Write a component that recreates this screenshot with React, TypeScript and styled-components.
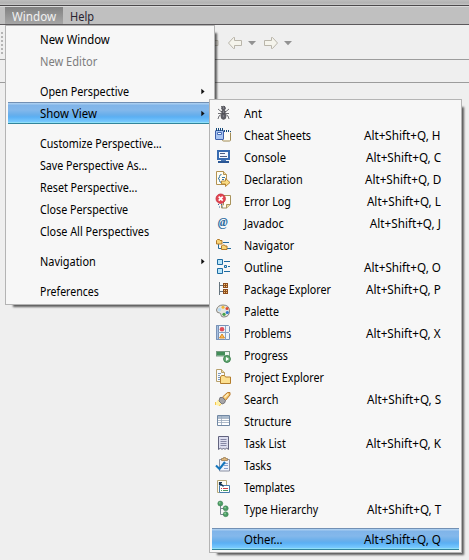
import React from "react";
import styled, { createGlobalStyle, css } from "styled-components";

const GlobalStyle = createGlobalStyle`
  * { box-sizing: border-box; }
  body { margin: 0; background: #efefef; overflow: hidden; }
`;

const Page = styled.div`
  position: relative;
  width: 469px;
  height: 560px;
  overflow: hidden;
  background: #efefef;
  font: 12px/22px "Noto Sans", "Open Sans", sans-serif;
  color: #000;
`;

const TitleStrip = styled.div`
  height: 6px;
  background: linear-gradient(#bdbdbd, #b2b2b2 3px, #c8c8c8 5px);
  border-bottom: 1px solid #4c4a4c;
`;

const MenuBar = styled.nav`
  display: flex;
  height: 19px;
  padding-left: 5px;
  background: #c0c0c0;
  border-top: 1px solid #dadada;
  border-bottom: 1px solid #5c595c;
`;

const MenuBarItem = styled.div<{ $active?: boolean }>`
  width: ${(p) => (p.$active ? 58 : 48)}px;
  height: 17px;
  padding-left: 7px;
  line-height: 19px;
  white-space: nowrap;
  color: ${(p) => (p.$active ? "#f1f1f1" : "#282330")};
  ${(p) => p.$active && css`background: linear-gradient(#818181, #a6a6a6);`}
`;

const ToolBar = styled.div`
  display: flex;
  align-items: flex-start;
  height: 35px;
  padding: 7px 0 0 1px;
  border-bottom: 1px solid #9c9c9c;
`;

const Grip = styled.div`
  width: 2px;
  height: 23px;
  margin-right: 209px;
  background: repeating-linear-gradient(#b5b5b5 0 2px, transparent 2px 4px);
`;

const SubBar = styled.div`
  height: 23px;
  border-bottom: 1px solid #9c9c9c;
`;

const Menu = styled.div<{ $x: number; $y: number; $w: number; $h: number }>`
  position: absolute;
  left: ${(p) => p.$x}px;
  top: ${(p) => p.$y}px;
  width: ${(p) => p.$w}px;
  height: ${(p) => p.$h}px;
  padding: 2px;
  background: #f7f7f7;
  border: 1px solid #b4b4b4;
  box-shadow: 5px 5px 2px -3px rgba(0, 0, 0, 0.62);
`;

const Row = styled.div<{ $selected?: boolean; $disabled?: boolean; $sub?: boolean }>`
  display: flex;
  align-items: center;
  height: 22px;
  padding-left: ${(p) => (p.$sub ? 3 : 32)}px;
  padding-right: ${(p) => (p.$sub ? 18 : 7)}px;
  color: ${(p) => (p.$disabled ? "#7d7d7d" : "#000")};
  ${(p) =>
    p.$selected &&
    css`
      background: linear-gradient(
        #7290b4 0 1px, #a8cdf0 1px 2px, #80b4e9 3px, #83b8eb 8px, #67aeeb 13px,
        #5bb0f4 15px, #79caff 20px, #90e0f8 20px 21px, #32849c 21px
      );
    `}
`;

const Gap = styled.div`
  height: 8px;
`;

const IconCell = styled.span`
  width: 29px;
  height: 16px;
  flex: none;
`;

const Label = styled.span<{ $fit?: number }>`
  flex: 1;
  padding-top: 1px;
  white-space: nowrap;
  transform: scaleX(${(p) => p.$fit ?? 1});
  transform-origin: 0 50%;
`;

const Shortcut = styled.span`
  padding-top: 1px;
  white-space: nowrap;
  transform: scaleX(0.975);
  transform-origin: 100% 50%;
`;

const BarLabel = styled.span<{ $fit: number }>`
  display: inline-block;
  transform: scaleX(${(p) => p.$fit});
  transform-origin: 0 50%;
`;

const Svg = styled.svg`
  display: block;
  flex: none;
  overflow: visible;
`;

const ToolIcon = styled(Svg)<{ $gap: number }>`
  margin-left: ${(p) => p.$gap}px;
`;

const Arrow = () => (
  <Svg width="4" height="7" viewBox="0 0 4 7">
    <path d="M.3 .8v5.4L3.6 3.5z" fill="#111" />
  </Svg>
);

const HistoryArrow = ({ back, gap }: { back?: boolean; gap: number }) => (
  <ToolIcon $gap={gap} width="14" height="22" viewBox="0 0 14 22">
    <path
      transform={back ? "matrix(-1 0 0 1 14 0)" : undefined}
      d="M.5 8.5h7v-3h1l5 5.5-5 5.5h-1v-3h-7z"
      fill="#f5f4ec"
      stroke="#b9b5aa"
    />
  </ToolIcon>
);

const DropTriangle = ({ gap }: { gap: number }) => (
  <ToolIcon $gap={gap} width="8" height="22" viewBox="0 0 8 22">
    <path d="M0 9h8L4 13.3z" fill="#929292" />
  </ToolIcon>
);

const EditLocation = () => (
  <ToolIcon $gap={0} width="8" height="22" viewBox="0 0 8 22">
    <path d="M0 8.5h6v5H0z" fill="#e8e6e0" stroke="#c0bcb2" />
  </ToolIcon>
);

const grid = (x: number, y: number) => (
  <g key={y}>
    <rect x={x} y={y} width="5" height="5" fill="#8d4c1d" />
    <path d={`M${x + 1} ${y + 1}h1v1h-1zM${x + 3} ${y + 1}h1v1h-1zM${x + 1} ${y + 3}h1v1h-1zM${x + 3} ${y + 3}h1v1h-1z`} fill="#f5c777" />
  </g>
);

const ball = (x: number, y: number) => (
  <g key={`${x}-${y}`}>
    <circle cx={x} cy={y} r="2.5" fill="#4b9d65" stroke="#39794e" strokeWidth=".5" />
    <circle cx={x - 0.6} cy={y - 0.7} r=".9" fill="#8aca94" />
  </g>
);

const icons: Record<string, React.ReactNode> = {
  ant: (
    <g fill="#606068" stroke="#4c4c53" strokeWidth=".8">
      <path d="M6 1l2 2 2-2M3 4l3 2.5h5L14 4M3 8.5h11M3 14l1-3 3-2h3l3 2 1 3" fill="none" />
      <circle cx="8.5" cy="3.2" r="1.9" />
      <circle cx="8.5" cy="7" r="1.8" />
      <ellipse cx="8.5" cy="11.5" rx="2.4" ry="2.8" />
      <path d="M8 3h1M8 7h1M8 11h1" stroke="#b0b0b8" />
    </g>
  ),
  cheat: (
    <>
      <rect x="7.5" y="4.5" width="8" height="9.5" rx="1" fill="#fffdf5" stroke="#a28c55" />
      <path d="M7 4.5h9" stroke="#f7f7f7" strokeWidth="2" />
      <path d="M9.5 3v2M11.5 3v2M13.5 3v2M15.5 4v1" stroke="#174a79" />
      <rect x=".5" y="3.5" width="8" height="9" rx=".5" fill="#a9c5f2" stroke="#3e60ab" />
      <path d="M1.5 1v3M3.5 1v3M5.5 1v3M7.5 1v3" stroke="#174a79" />
      <path d="M2.5 5.5h4v2h-4z" fill="#fff" stroke="#4a70b8" />
    </>
  ),
  console: (
    <>
      <path d="M3 2h11v8H3z" fill="#f4f8fe" stroke="#386bb0" strokeWidth="2" />
      <path d="M5 4.5h5M5 7.5h7" stroke="#4d5f85" />
      <path d="M6 11h5v1.5H6z" fill="#4a78b5" />
      <path d="M3 13h11" stroke="#2b5795" strokeWidth="2" />
    </>
  ),
  declaration: (
    <>
      <path d="M1.5.5h7l3 3v10h-10z" fill="#fffdf2" stroke="#b49351" />
      <path d="M8.5.5v3h3" fill="#eed9a0" stroke="#b49351" />
      <path d="M6.5 3.5Q4.5 3.5 4.5 5.5T3 7.5q1.500 0 1.500 2t2 2M7 6.5h3M7 8.5h2" fill="none" stroke="#3975a5" />
      <path d="M6.5 10h4V7.500l4.500 4-4.500 4V13h-4z" fill="#fbdc82" stroke="#ab7625" strokeWidth=".8" />
    </>
  ),
  error: (
    <>
      <path d="M8.5 2.5h7v9l-4 3.5h-5v-3h2z" fill="#fffdf2" stroke="#a9935c" />
      <path d="M11.5 15v-3.5h4" fill="#eed9a0" stroke="#a9935c" />
      <path d="M3 11.5h1M6 11.5h1M4 14h1M7 14h1" stroke="#3b699d" />
      <circle cx="5.7" cy="5.7" r="4.7" fill="#e34652" stroke="#c22a38" strokeWidth=".8" />
      <path d="M3.7 3.7l4 4m0-4l-4 4" stroke="#fff" strokeWidth="1.7" />
    </>
  ),
  javadoc: (
    <text x="2.7" y="11" fontFamily="Liberation Serif, serif" fontSize="12" fontWeight="700" fontStyle="italic" fill="#2c6c9f">@</text>
  ),
  navigator: (
    <>
      <path d="M3.5 7v4.5H7M8 5.5h6M12 11.5h4" fill="none" stroke="#276b9c" />
      <path d="M1.5 3.5l1-1h2l.5 1h2v3.5H1.5zM6.5 9l1-1h2l.5 1h2v3.5H6.5z" fill="#f9d579" stroke="#b47b29" />
    </>
  ),
  outline: (
    <g fill="#b8e5fa" stroke="#1f6ca2">
      <path d="M2.5.5h5v5h-5zM2.5 9.5h5v5h-5z" />
      <path d="M9.5 6.5h2v2h-2z" />
      <path d="M9 2.5h6M13 7.5h2M9 12.5h6" />
    </g>
  ),
  pkg: (
    <>
      <path d="M4.5 1v13M4 4.5h4M4 10.5h4" stroke="#66757f" fill="none" />
      {[2, 8].map((y) => grid(8, y))}
    </>
  ),
  palette: (
    <>
      <path d="M1.500 7Q2.500 2 8 2q6.500 0 6.500 6T8.500 14q-2.500 0-2.500-2t-1.500-2Q1.500 10 1.500 7z" fill="#e6e5df" stroke="#85857f" />
      <circle cx="4.500" cy="6.800" r="1.700" fill="#b8dbf4" />
      <circle cx="8" cy="4.300" r="1.500" fill="#f2b835" />
      <circle cx="12" cy="5.500" r="1.500" fill="#e4482e" />
      <circle cx="12.300" cy="9.500" r="1.600" fill="#3176cf" />
      <circle cx="9" cy="11.300" r="1.600" fill="#46a14a" />
    </>
  ),
  problems: (
    <>
      <path d="M1.5.5h12l1 1v5l-1 1 1 1v6h-13z" fill="#eef4fb" stroke="#7993b7" />
      <path d="M1.5.5h2v14h-2z" fill="#a9c2e2" stroke="#7993b7" />
      <path d="M3 7.5h11M10.5 1v14" stroke="#8ba3c4" />
      <circle cx="7" cy="4.2" r="2.3" fill="#e14e58" />
      <path d="M7 9l2.500 4h-5z" fill="#f8bd54" stroke="#df8b27" />
    </>
  ),
  progress: (
    <>
      <rect x="1.5" y="4.5" width="13" height="4.5" fill="#eef6ef" stroke="#779b82" />
      <path d="M2 5h8v3.5H2z" fill="#438e59" />
      <circle cx="12" cy="12" r="3.4" fill="#65ad74" stroke="#3d814f" />
      <path d="M11 10l3 2-3 2z" fill="#fff" />
    </>
  ),
  project: (
    <>
      <path d="M1.5.5h5l3 3v9h-8z" fill="#f8fafc" stroke="#b8a16c" />
      <path d="M6.5.5v3h3" fill="#eed9a0" stroke="#b8a16c" />
      <path d="M3 4.5h3M3 6.5h2M3 8.5h2M3 10.5h2" stroke="#7c9abf" />
      <path d="M5.5 8l1-1.5h3l1 1.5h5v6.5h-10z" fill="#fce090" stroke="#b47e2d" />
    </>
  ),
  search: (
    <>
      <path d="M0 13.500l3-5 5 4-4 2.500z" fill="#fff1a8" />
      <path d="M.5 14v-3M4 14.500l2-1" stroke="#f5c64c" />
      <path d="M7.500 6L12.500 1.500h2.500V4L10.500 9.500z" fill="#f5c46c" stroke="#b87b32" />
      <path d="M9.500 6.500L13 3" stroke="#fff1c1" strokeWidth="1.500" />
      <path d="M5 6.500h2.500l3 3-1 2.500-2.500 1-3-3z" fill="#a6a5a8" stroke="#78777d" />
    </>
  ),
  structure: (
    <>
      <path d="M2.5 2.5h12v10h-12z" fill="#fff" stroke="#7188a4" />
      <path d="M3 3h11v2H3z" fill="#a9bacd" />
      <path d="M3 5.5h11M3 7.5h11M3 9.5h11M6.5 3v9" stroke="#9aaabd" strokeWidth=".8" />
    </>
  ),
  tasklist: (
    <>
      <path d="M3.5 1.5h10v13l-2-1.5-1.5 1.5L8.5 13 7 14.5l-1.5-1.5-2 1.5z" fill="#dcddef" stroke="#62637e" />
      <path d="M5.5 4.5h6M5.5 6.5h6M5.5 8.5h6M5.5 10.5h6" stroke="#8587a5" />
    </>
  ),
  tasks: (
    <>
      <path d="M4.5 2.5h10V14h-10z" fill="#edf2fb" stroke="#8a90a2" />
      <path d="M6.500 3.500v-2H8.500v-1h2v1h2v2z" fill="#dcb57b" stroke="#9d7e53" strokeWidth=".8" />
      <path d="M10 6.500h3M9 8.500h4M9 11.500h4" stroke="#87a1cf" />
      <path d="M1 8.5L4.500 12 10 5" fill="none" stroke="#1476bd" strokeWidth="2.1" />
    </>
  ),
  templates: (
    <>
      <path d="M2.5 1.5h9v12h-9z" fill="#fffdf5" stroke="#b6a879" />
      <path d="M4.5 6.5h10v7h-10z" fill="#fff" stroke="#477cac" />
      <path d="M6 9.5h1M8 9.5h5" stroke="#cc424b" />
      <path d="M6 11.5h1M8 11.5h5" stroke="#499a60" />
      <path d="M4.5 6V3.5H7M4.5 3.5L8.500 7.500" fill="none" stroke="#173450" strokeWidth="1.2" />
    </>
  ),
  hierarchy: (
    <>
      <path d="M5.5 3v10.5H11M5.5 7.5H11" fill="none" stroke="#7a8590" />
      {[[5.3, 2.5], [10.7, 7.3], [10.7, 13.2]].map(([x, y]) => ball(x, y))}
    </>
  ),
};

type MainItem = { label: string; fit: number; disabled?: boolean; arrow?: boolean; selected?: boolean };

const mainGroups: MainItem[][] = [
  [{ label: "New Window", fit: 0.946 }, { label: "New Editor", fit: 0.925, disabled: true }],
  [
    { label: "Open Perspective", fit: 0.9, arrow: true },
    { label: "Show View", fit: 0.95, arrow: true, selected: true },
  ],
  [
    { label: "Customize Perspective...", fit: 0.89 },
    { label: "Save Perspective As...", fit: 0.89 },
    { label: "Reset Perspective...", fit: 0.895 },
    { label: "Close Perspective", fit: 0.895 },
    { label: "Close All Perspectives", fit: 0.9 },
  ],
  [{ label: "Navigation", fit: 0.91, arrow: true }],
  [{ label: "Preferences", fit: 0.88 }],
];

type ViewItem = [label: string, icon: string, fit: number, key?: string];

const views: ViewItem[] = [
  ["Ant", "ant", 0.92],
  ["Cheat Sheets", "cheat", 0.912, "H"],
  ["Console", "console", 0.93, "C"],
  ["Declaration", "declaration", 0.907, "D"],
  ["Error Log", "error", 0.89, "L"],
  ["Javadoc", "javadoc", 0.92, "J"],
  ["Navigator", "navigator", 0.9],
  ["Outline", "outline", 0.93, "O"],
  ["Package Explorer", "pkg", 0.893, "P"],
  ["Palette", "palette", 0.89],
  ["Problems", "problems", 0.885, "X"],
  ["Progress", "progress", 0.885],
  ["Project Explorer", "project", 0.894],
  ["Search", "search", 0.907, "S"],
  ["Structure", "structure", 0.905],
  ["Task List", "tasklist", 0.885, "K"],
  ["Tasks", "tasks", 0.9],
  ["Templates", "templates", 0.88],
  ["Type Hierarchy", "hierarchy", 0.883, "T"],
];

export default function App() {
  return (
    <Page>
      <GlobalStyle />
      <TitleStrip />
      <MenuBar>
        <MenuBarItem $active><BarLabel $fit={0.97}>Window</BarLabel></MenuBarItem>
        <MenuBarItem><BarLabel $fit={0.92}>Help</BarLabel></MenuBarItem>
      </MenuBar>
      <ToolBar>
        <Grip />
        <EditLocation />
        <HistoryArrow back gap={8} />
        <DropTriangle gap={6} />
        <HistoryArrow gap={8} />
        <DropTriangle gap={6} />
      </ToolBar>
      <SubBar />
      <Menu $x={5} $y={25} $w={210} $h={280}>
        {mainGroups.map((group, i) => (
          <React.Fragment key={i}>
            {i > 0 && <Gap />}
            {group.map((item) => (
              <Row key={item.label} $selected={item.selected} $disabled={item.disabled}>
                <Label $fit={item.fit}>{item.label}</Label>
                {item.arrow && <Arrow />}
              </Row>
            ))}
          </React.Fragment>
        ))}
      </Menu>
      <Menu $x={209} $y={99} $w={253} $h={454}>
        {views.map(([label, icon, fit, key]) => (
          <Row key={label} $sub>
            <IconCell>
              <Svg width="16" height="16" viewBox="0 0 16 16">{icons[icon]}</Svg>
            </IconCell>
            <Label $fit={fit}>{label}</Label>
            {key && <Shortcut>{`Alt+Shift+Q, ${key}`}</Shortcut>}
          </Row>
        ))}
        <Gap />
        <Row $sub $selected>
          <IconCell />
          <Label $fit={0.95}>Other...</Label>
          <Shortcut>Alt+Shift+Q, Q</Shortcut>
        </Row>
      </Menu>
    </Page>
  );
}
